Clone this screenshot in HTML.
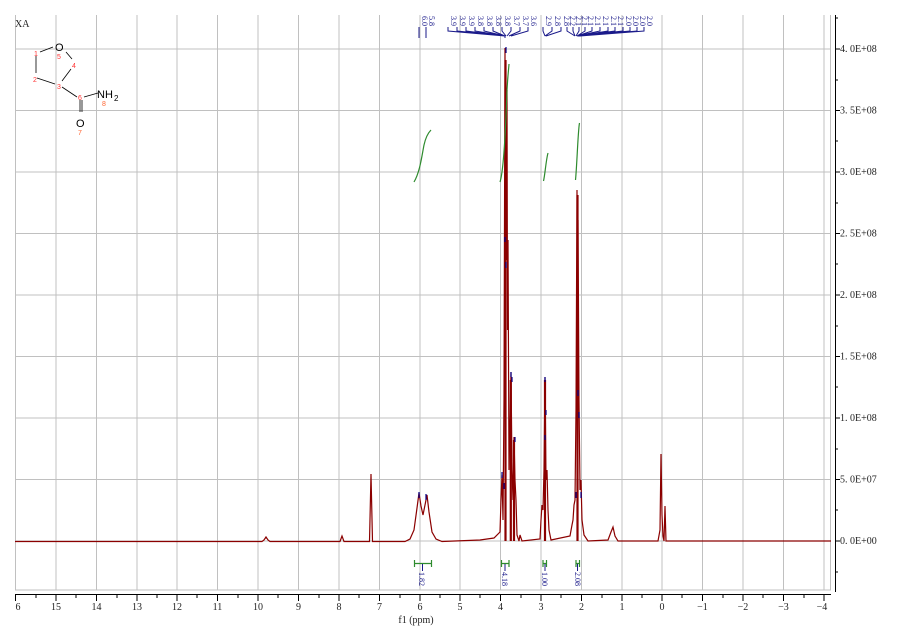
<!DOCTYPE html>
<html><head><meta charset="utf-8"><style>
html,body{margin:0;padding:0;background:#fff;width:904px;height:636px;overflow:hidden}
svg{display:block}
.ax{font-family:"Liberation Serif",serif;font-size:10px;fill:#222}
.lb{font-family:"Liberation Serif",serif;font-size:8px;fill:#1a1a8a}
.mol{font-family:"Liberation Sans",sans-serif}
</style></head><body>
<svg width="904" height="636" viewBox="0 0 904 636" xmlns="http://www.w3.org/2000/svg">
<g stroke="#c0c0c0" stroke-width="1" fill="none">
<path d="M15.5 15V590M56 15V590M96.5 15V590M137 15V590M177 15V590M217.5 15V590M258 15V590M298.5 15V590M339 15V590M379.5 15V590M420 15V590M460 15V590M500.5 15V590M541 15V590M581.5 15V590M622 15V590M662 15V590M702.5 15V590M743 15V590M783.5 15V590M824 15V590M830.5 15V590"/>
<path d="M15 49H831M15 110.5H831M15 172H831M15 233.5H831M15 295H831M15 356.5H831M15 418H831M15 479.5H831M15 541H831M15 590H831"/>
</g>
<g stroke="#000" stroke-width="1">
<path d="M15 594.5H831"/>
<path d="M15.5 594V601M56 594V601M96.5 594V601M137 594V601M177 594V601M217.5 594V601M258 594V601M298.5 594V601M339 594V601M379.5 594V601M420 594V601M460 594V601M500.5 594V601M541 594V601M581.5 594V601M622 594V601M662 594V601M702.5 594V601M743 594V601M783.5 594V601M824 594V601"/>
<path d="M36 594V598M76 594V598M117 594V598M157 594V598M197 594V598M238 594V598M278 594V598M319 594V598M359 594V598M400 594V598M440 594V598M480 594V598M521 594V598M561 594V598M602 594V598M642 594V598M682 594V598M723 594V598M763 594V598M804 594V598"/>
</g>
<g class="ax" text-anchor="middle">
<text x="18" y="610">6</text><text x="56" y="610">15</text><text x="96.5" y="610">14</text><text x="137" y="610">13</text><text x="177" y="610">12</text><text x="217.5" y="610">11</text><text x="258" y="610">10</text><text x="298.5" y="610">9</text><text x="339" y="610">8</text><text x="379.5" y="610">7</text><text x="420" y="610">6</text><text x="460" y="610">5</text><text x="500.5" y="610">4</text><text x="541" y="610">3</text><text x="581.5" y="610">2</text><text x="622" y="610">1</text><text x="662" y="610">0</text><text x="702.5" y="610">−1</text><text x="743" y="610">−2</text><text x="783.5" y="610">−3</text><text x="822" y="610">−4</text>
<text x="416" y="623">f1 (ppm)</text>
</g>
<g stroke="#000" stroke-width="1">
<path d="M835.5 15V592"/>
<path d="M835 49H840M835 110.5H840M835 172H840M835 233.5H840M835 295H840M835 356.5H840M835 418H840M835 479.5H840M835 541H840"/>
<path d="M835 18H838M835 80H838M835 141H838M835 203H838M835 264H838M835 326H838M835 387H838M835 449H838M835 510H838M835 572H838"/>
</g>
<g class="ax" font-size="9.5">
<text x="840" y="52">4. 0E+08</text><text x="840" y="113.5">3. 5E+08</text><text x="840" y="175">3. 0E+08</text><text x="840" y="236.5">2. 5E+08</text><text x="840" y="298">2. 0E+08</text><text x="840" y="359.5">1. 5E+08</text><text x="840" y="421">1. 0E+08</text><text x="840" y="482.5">5. 0E+07</text><text x="840" y="544">0. 0E+00</text>
</g>
<path fill="none" stroke="#8b0000" stroke-width="1.2" d="M15 541.5H262L264 540L266 537L268 540L270 541.5H340L342 536L344 541.5H369.5L371 474L372.5 541.5H405L410 539L414 530L417 508L419 493L421 506L423 515L425 505L427 495L429 512L432 532L436 539L442 541.5L480 540L494 538L500 532L501 500L502 475L503 520L504 400L505 48L505.5 300L506 120L506.5 260L507 90L507.5 330L508 240L509 470L510 420L511 372L512 470L513 500L514 437L515 480L516 500L517 535L519 541L520 535L522 541L540 539L541 520L542 505L543 510L544 470L545 377L546 480L547 470L548 510L549 530L551 540L570 536L572 525L573 520L574 505L575 500L576 410L577 190L577.5 300L578 220L579 400L580 490L581 480L582 520L584 535L588 541L608 540L611 532L613 527L615 536L618 541L658 541L660 530L661 454L662 515L663 536L664 541L665 506L666 541H831"/>
<g stroke="#8b0000" stroke-width="2.2" fill="none">
<path d="M505.5 541V60M510.8 541V380M514 541V440M545 541V380M577.5 541V195"/>
</g>
<g stroke="#2e8b2e" stroke-width="1.2" fill="none">
<path d="M414 182C420 172 422 155 424 145C426 136 429 132 431 130"/>
<path d="M500 182C504 170 506 120 507 90C508 72 509 66 509 64"/>
<path d="M543.5 181C545 175 546 160 548 153"/>
<path d="M575.5 180C577 165 578 130 579.5 123"/>
</g>
<g stroke="#00008b" stroke-width="1.2" fill="none">
<path d="M506 47V53M505 237V242M506 262V268M511 372V377M512 377V382M515 437V442M502 472V478M504 483V489M545 377V382M546 410V415M545 435V440M578 390V396M579 412V418M576 492V498M581 492V498M419 492V498M426 494V500"/>
</g>
<g stroke="#1a1a8a" stroke-width="1" fill="none">
<path d="M419 27V38M426 27V38"/>
<path d="M448 27V31L505 36V38M457 27V31L505 36M466 27V31L505 36M475 27V31L505 36M484 27V31L505 36M493 27V31L505 36M502 27V31L506 36M511 27V31L507 36M520 27V31L509 36M528 27V31L511 36"/>
<path d="M543 27V31L545 36M552 27V31L545 36M561 27V31L546 36"/>
<path d="M567 27V31L575 36M573 27V31L575 36M579 27V31L576 36M585 27V31L577 36M592 27V31L577 36M600 27V31L577 36M608 27V31L578 36M615 27V31L578 36M623 27V31L578 36M630 27V31L579 36M637 27V31L580 36M644 27V31L580 36"/>
</g>
<g class="lb">
<text transform="translate(422,16) rotate(90)">6.0</text><text transform="translate(429,16) rotate(90)">5.8</text>
<text transform="translate(451,16) rotate(90)">3.9</text><text transform="translate(460,16) rotate(90)">3.9</text><text transform="translate(469,16) rotate(90)">3.9</text><text transform="translate(478,16) rotate(90)">3.8</text><text transform="translate(487,16) rotate(90)">3.8</text><text transform="translate(496,16) rotate(90)">3.8</text><text transform="translate(505,16) rotate(90)">3.8</text><text transform="translate(514,16) rotate(90)">3.7</text><text transform="translate(523,16) rotate(90)">3.7</text><text transform="translate(531,16) rotate(90)">3.6</text>
<text transform="translate(546,16) rotate(90)">2.9</text><text transform="translate(555,16) rotate(90)">2.8</text><text transform="translate(564,16) rotate(90)">2.8</text>
<text transform="translate(570,16) rotate(90)">2.2</text><text transform="translate(576,16) rotate(90)">2.1</text><text transform="translate(582,16) rotate(90)">2.1</text><text transform="translate(588,16) rotate(90)">2.1</text><text transform="translate(595,16) rotate(90)">2.1</text><text transform="translate(603,16) rotate(90)">2.1</text><text transform="translate(611,16) rotate(90)">2.1</text><text transform="translate(618,16) rotate(90)">2.1</text><text transform="translate(626,16) rotate(90)">2.0</text><text transform="translate(633,16) rotate(90)">2.0</text><text transform="translate(640,16) rotate(90)">2.0</text><text transform="translate(647,16) rotate(90)">2.0</text>
</g>
<g stroke="#2e8b2e" stroke-width="1.2" fill="none">
<path d="M414.5 563.5H431.5M414.5 560V567M431.5 560V567"/>
<path d="M501.5 563.5H509M501.5 560V567M509 560V567"/>
<path d="M543 563.5H546.5M543 560V567M546.5 560V567"/>
<path d="M576 563.5H579.5M576 560V567M579.5 560V567"/>
</g>
<g stroke="#1a1a8a" stroke-width="1"><path d="M422.5 564V571M505 564V571M545 564V571M577.5 564V571"/></g>
<g class="lb" fill="#5555aa" font-size="9">
<text transform="translate(419,572) rotate(90)">1.82</text>
<text transform="translate(502,572) rotate(90)">4.18</text>
<text transform="translate(542,572) rotate(90)">1.00</text>
<text transform="translate(575,572) rotate(90)">2.08</text>
</g>
<text x="15" y="27" class="ax" font-size="9">XA</text>
<g stroke="#000" stroke-width="0.8" fill="none">
<path d="M40 52L53 47M36 56V73M37 78L55 84M62 81L71 69M66 52L72 59M62 87L77 97M84 97L98 93M80 100V112M82 100V112"/>
</g>
<g class="mol">
<text x="55" y="51" font-size="11" fill="#000">O</text>
<text x="97" y="98" font-size="11" fill="#000">NH</text><text x="114" y="101" font-size="8" fill="#000">2</text>
<text x="76" y="127" font-size="11" fill="#000">O</text>
<g font-size="7" fill="#ff3333">
<text x="34" y="56">1</text><text x="33" y="82">2</text><text x="57" y="89">3</text><text x="72" y="68">4</text><text x="57" y="59">5</text><text x="78" y="100">6</text>
<text x="78" y="135" fill="#ff6633">7</text><text x="102" y="106" fill="#ff6633">8</text>
</g>
</g>
</svg>
</body></html>
